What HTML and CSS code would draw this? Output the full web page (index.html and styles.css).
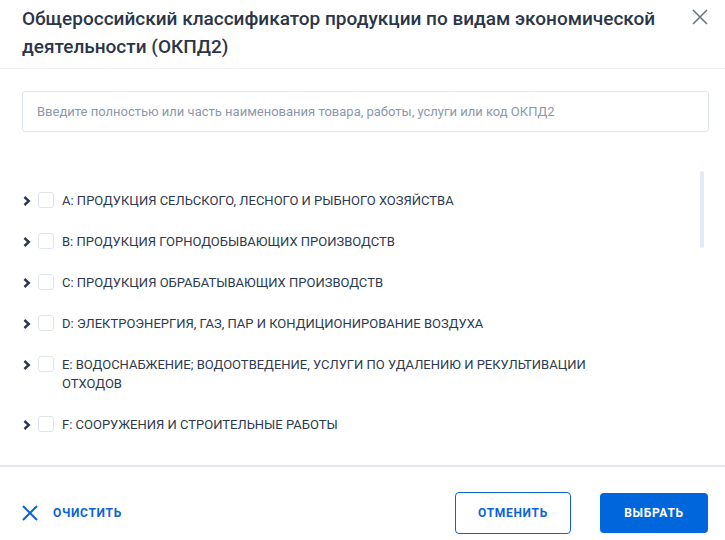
FILE: index.html
```html
<!DOCTYPE html>
<html lang="ru">
<head>
<meta charset="utf-8">
<link rel="stylesheet" href="styles.css">
</head>
<body>
<div class="modal">
  <header class="head">
    <h1 class="title">Общероссийский классификатор продукции по видам экономической деятельности (ОКПД2)</h1>
    <button class="close" aria-label="Закрыть">
      <svg width="16" height="16" viewBox="0 0 16 16"><path d="M1 1L15 15M15 1L1 15" stroke="#6b7585" stroke-width="1.6" fill="none"/></svg>
    </button>
  </header>
  <div class="search">
    <input class="search-input" type="text" placeholder="Введите полностью или часть наименования товара, работы, услуги или код ОКПД2">
  </div>
  <div class="tree">
    <div class="scroll"></div>
    <div class="row"><span class="chev"><svg width="10" height="10" viewBox="0 0 10 10"><path d="M2.4 1L6.8 5L2.4 9" stroke="#2d3a4e" stroke-width="2.4" fill="none"/></svg></span><span class="box"></span><span class="label">A: ПРОДУКЦИЯ СЕЛЬСКОГО, ЛЕСНОГО И РЫБНОГО ХОЗЯЙСТВА</span></div>
    <div class="row"><span class="chev"><svg width="10" height="10" viewBox="0 0 10 10"><path d="M2.4 1L6.8 5L2.4 9" stroke="#2d3a4e" stroke-width="2.4" fill="none"/></svg></span><span class="box"></span><span class="label">B: ПРОДУКЦИЯ ГОРНОДОБЫВАЮЩИХ ПРОИЗВОДСТВ</span></div>
    <div class="row"><span class="chev"><svg width="10" height="10" viewBox="0 0 10 10"><path d="M2.4 1L6.8 5L2.4 9" stroke="#2d3a4e" stroke-width="2.4" fill="none"/></svg></span><span class="box"></span><span class="label">C: ПРОДУКЦИЯ ОБРАБАТЫВАЮЩИХ ПРОИЗВОДСТВ</span></div>
    <div class="row"><span class="chev"><svg width="10" height="10" viewBox="0 0 10 10"><path d="M2.4 1L6.8 5L2.4 9" stroke="#2d3a4e" stroke-width="2.4" fill="none"/></svg></span><span class="box"></span><span class="label">D: ЭЛЕКТРОЭНЕРГИЯ, ГАЗ, ПАР И КОНДИЦИОНИРОВАНИЕ ВОЗДУХА</span></div>
    <div class="row"><span class="chev"><svg width="10" height="10" viewBox="0 0 10 10"><path d="M2.4 1L6.8 5L2.4 9" stroke="#2d3a4e" stroke-width="2.4" fill="none"/></svg></span><span class="box"></span><span class="label">E: ВОДОСНАБЖЕНИЕ; ВОДООТВЕДЕНИЕ, УСЛУГИ ПО УДАЛЕНИЮ И РЕКУЛЬТИВАЦИИ ОТХОДОВ</span></div>
    <div class="row"><span class="chev"><svg width="10" height="10" viewBox="0 0 10 10"><path d="M2.4 1L6.8 5L2.4 9" stroke="#2d3a4e" stroke-width="2.4" fill="none"/></svg></span><span class="box"></span><span class="label">F: СООРУЖЕНИЯ И СТРОИТЕЛЬНЫЕ РАБОТЫ</span></div>
  </div>
  <footer class="foot">
    <button class="clear">
      <svg width="16" height="16" viewBox="0 0 16 16"><path d="M1 1L15 15M15 1L1 15" stroke="#0a64d6" stroke-width="2" fill="none"/></svg>
      <span>ОЧИСТИТЬ</span>
    </button>
    <div class="actions">
      <button class="btn btn-outline">ОТМЕНИТЬ</button>
      <button class="btn btn-primary">ВЫБРАТЬ</button>
    </div>
  </footer>
</div>
</body>
</html>
```

FILE: styles.css
```css
* { box-sizing: border-box; }
html, body { margin: 0; padding: 0; background: #fff; }
body { font-family: Roboto, "Noto Sans", sans-serif; color: #2d3a4e; width: 725px; height: 540px; overflow: hidden; }
button { font-family: inherit; cursor: pointer; }

.modal { width: 725px; }

.head {
  display: flex;
  justify-content: space-between;
  align-items: flex-start;
  padding: 5px 17px 7px 22px;
  border-bottom: 1px solid #eceef2;
}
.title {
  margin: 0;
  font-size: 19px;
  line-height: 28px;
  font-weight: 500;
  color: #2b3648;
  max-width: 660px;
}
.close {
  border: 0;
  background: none;
  padding: 0;
  margin-top: 4px;
  width: 16px;
  height: 16px;
  display: flex;
}

.search { padding: 22px 16px 0 22px; }
.search-input {
  width: 100%;
  height: 41px;
  border: 1px solid #dfe5ec;
  border-radius: 3px;
  padding: 0 14px;
  font-family: inherit;
  font-size: 13px;
  color: #2d3a4e;
  outline: none;
}
.search-input::placeholder { color: #8c98ab; }

.tree {
  position: relative;
  padding: 48px 0 20px 22px;
}
.scroll {
  position: absolute;
  left: 700px;
  top: 39px;
  width: 4px;
  height: 77px;
  background: #e3ebf3;
  border-radius: 2px;
}
.row {
  display: flex;
  align-items: flex-start;
  padding: 11px 0;
  font-size: 13px;
  line-height: 19px;
  max-width: 600px;
}
.chev { width: 10px; height: 19px; display: flex; align-items: center; flex: none; }
.box {
  flex: none;
  width: 16px;
  height: 16px;
  border: 1px solid #dfe5ec;
  border-radius: 3px;
  margin: 1px 8px 0 6px;
}
.label { color: #2d3a4e; }

.foot {
  border-top: 2px solid #e6e7ec;
  display: flex;
  justify-content: space-between;
  align-items: center;
  padding: 25px 17px 0 22px;
}
.clear {
  display: flex;
  align-items: center;
  gap: 15px;
  border: 0;
  background: none;
  padding: 0;
  color: #0a64d6;
  font-size: 12px;
  font-weight: 700;
  letter-spacing: 0.7px;
}
.actions { display: flex; gap: 29px; align-items: center; }
.btn {
  height: 42px;
  border-radius: 4px;
  font-size: 12px;
  font-weight: 700;
  letter-spacing: 0.7px;
}
.btn-outline {
  width: 116px;
  background: #fff;
  border: 1px solid #0a64d6;
  color: #0a64d6;
}
.btn-primary {
  width: 108px;
  height: 40px;
  background: #0066db;
  border: 0;
  color: #fff;
}
```
